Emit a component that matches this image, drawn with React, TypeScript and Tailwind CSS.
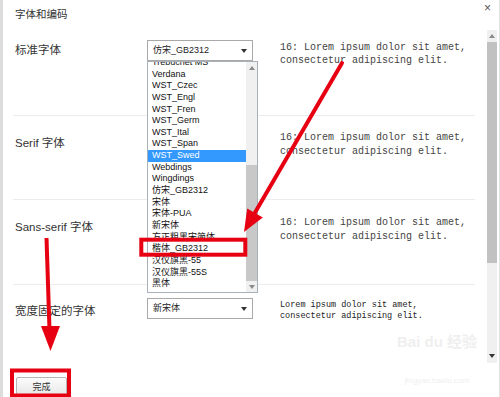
import React from 'react';

const fonts = [
  'Trebuchet MS', 'Verdana', 'WST_Czec', 'WST_Engl', 'WST_Fren', 'WST_Germ', 'WST_Ital', 'WST_Span',
  'WST_Swed', 'Webdings', 'Wingdings', '仿宋_GB2312', '宋体', '宋体-PUA', '新宋体', '方正粗黑宋简体',
  '楷体_GB2312', '汉仪旗黑-55', '汉仪旗黑-55S', '黑体',
];

const Caret = ({ up = false }: { up?: boolean }) => (
  <svg width="6" height="4" viewBox="0 0 6 4" className="block">
    {up ? <path d="M0 4 L3 0 L6 4 Z" fill="#8a8a8a" /> : <path d="M0 0 L6 0 L3 4 Z" fill="#333" />}
  </svg>
);

const Select = ({ value }: { value: string }) => (
  <div className="h-[21px] w-[106px] border border-[#a9a9a9] bg-white flex items-center justify-between pl-[5px] pr-[5px] text-[9px] text-[#222]">
    <span>{value}</span>
    <Caret />
  </div>
);

const Preview = ({ prefix }: { prefix: boolean }) => (
  <div className="font-['Liberation_Mono',monospace] text-[10px] leading-[13.5px] text-[#444] whitespace-pre">
    {prefix ? '16: ' : ''}Lorem ipsum dolor sit amet,
    <br />
    consectetur adipiscing elit.
  </div>
);

const FontList = () => (
  <div className="absolute left-0 top-[21px] z-10 w-[111px] h-[232px] border border-[#a8b0ba] bg-white flex">
    <div className="w-[98px] overflow-hidden">
      <div className="mt-[-5px]">
        {fonts.map((f) => (
          <div
            key={f}
            className={
              f === 'WST_Swed'
                ? 'h-[11.65px] leading-[11.65px] text-[9px] pl-[4px] whitespace-nowrap bg-[#3399ff] text-white'
                : 'h-[11.65px] leading-[11.65px] text-[9px] pl-[4px] whitespace-nowrap text-[#111]'
            }
          >
            {f}
          </div>
        ))}
      </div>
    </div>
    <div className="w-[11px] bg-[#f0f0f0] flex flex-col">
      <div className="h-[12px] flex items-center justify-center">
        <Caret up />
      </div>
      <div className="h-[91px]" />
      <div className="h-[116px] bg-[#c8c8c8]" />
      <div className="flex-1 flex items-end justify-center pb-[3px]">
        <svg width="6" height="4" viewBox="0 0 6 4"><path d="M0 0 L6 0 L3 4 Z" fill="#8a8a8a" /></svg>
      </div>
    </div>
  </div>
);

export default function App() {
  return (
    <div className="relative w-[500px] h-[397px] overflow-hidden bg-white border-l-[3px] border-l-[#dcdcdc] border-r border-r-[#e2e2e2] font-['Liberation_Sans','Noto_Sans_CJK_SC',sans-serif] text-[#333]">
      {/* header */}
      <div className="h-[30px] flex items-start justify-between pl-[12px] pr-[8px]">
        <div className="mt-[8px] text-[10.5px] leading-[12px]">字体和编码</div>
        <div className="mt-[2px] text-[12px] leading-[12px] text-[#555]">×</div>
      </div>

      {/* body */}
      <div className="flex h-[333px]">
        <div className="w-[484px]">
          <div className="ml-[10px] w-[462px]">
            <div className="flex items-start h-[86px] pt-[10px] border-b border-[#ececec]">
              <div className="w-[134px] pl-[2px] mt-[3px] text-[11.5px] leading-[14px]">标准字体</div>
              <div className="relative">
                <Select value="仿宋_GB2312" />
                <FontList />
              </div>
              <div className="ml-[27px] mt-[0.5px]">
                <Preview prefix />
              </div>
            </div>

            <div className="flex items-start h-[84px] pt-[15px] border-b border-[#ececec]">
              <div className="w-[134px] pl-[2px] mt-[5px] text-[11.5px] leading-[14px]">Serif 字体</div>
              <div className="w-[106px]" />
              <div className="ml-[27px]">
                <Preview prefix />
              </div>
            </div>

            <div className="flex items-start h-[85px] pt-[16px] border-b border-[#ececec]">
              <div className="w-[134px] pl-[2px] mt-[4px] text-[11.5px] leading-[14px]">Sans-serif 字体</div>
              <div className="w-[106px]" />
              <div className="ml-[27px]">
                <Preview prefix />
              </div>
            </div>

            <div className="flex items-start pt-[13px]">
              <div className="w-[134px] pl-[2px] mt-[6px] text-[11.5px] leading-[14px]">宽度固定的字体</div>
              <Select value="新宋体" />
              <div className="ml-[27px] mt-[1.5px] font-['Liberation_Mono',monospace] text-[8.5px] leading-[11px] text-[#222] whitespace-pre">
                Lorem ipsum dolor sit amet,
                <br />
                consectetur adipiscing elit.
              </div>
            </div>
          </div>
        </div>

        {/* page scrollbar */}
        <div className="w-[10px] bg-[#f0f0f0] flex flex-col">
          <div className="h-[12px] flex items-center justify-center">
            <Caret up />
          </div>
          <div className="h-[221px] bg-[#c1c1c1]" />
          <div className="flex-1 flex items-end justify-center pb-[5px]">
            <svg width="6" height="4" viewBox="0 0 6 4"><path d="M0 0 L6 0 L3 4 Z" fill="#333" /></svg>
          </div>
        </div>
      </div>

      {/* footer */}
      <div className="pl-[13px] pt-[10px]">
        <button className="w-[51px] h-[21px] border border-[#b5b5b5] rounded-[2px] bg-linear-to-b from-[#fbfbfb] to-[#e6e6e6] text-[9px] text-[#333] leading-[19px]">
          完成
        </button>
      </div>

      {/* watermark */}
      <div className="absolute left-[394px] top-[333px] w-[80px] flex flex-col items-center text-[#efefef] pointer-events-none whitespace-nowrap">
        <div className="text-[15px] leading-[18px] font-bold">Bai du 经验</div>
        <div className="text-[8px] leading-[10px] mt-[25px]">jingyan.baidu.com</div>
      </div>

      {/* red annotations */}
      <svg className="absolute left-[-3px] top-0 z-20 pointer-events-none" width="500" height="397" viewBox="0 0 500 397">
        <rect x="141.3" y="239.7" width="104" height="15" fill="none" stroke="#e60012" strokeWidth="4" />
        <line x1="342" y1="63" x2="253" y2="216" stroke="#e60012" strokeWidth="4" strokeLinecap="round" />
        <polygon points="244,232 262.8,217.5 247.2,208.5" fill="#e60012" />
        <line x1="46.5" y1="238" x2="49.5" y2="330" stroke="#e60012" strokeWidth="4" />
        <polygon points="41,326 60,326 50.5,351" fill="#e60012" />
        <rect x="12" y="370.5" width="57" height="25" fill="none" stroke="#e60012" strokeWidth="4" />
      </svg>
    </div>
  );
}
